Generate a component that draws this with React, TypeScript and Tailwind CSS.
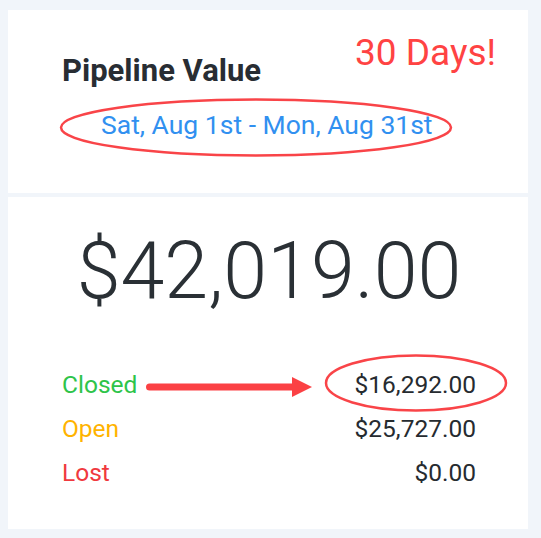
import React from 'react';

const rows = [
  { label: 'Closed', value: '$16,292.00', color: 'text-[#2ec44a]' },
  { label: 'Open', value: '$25,727.00', color: 'text-[#ffb300]' },
  { label: 'Lost', value: '$0.00', color: 'text-[#f0393e]' },
];

const App = () => {
  return (
    <div
      className="relative w-[541px] h-[538px] bg-[#f1f5fa] pt-[10px] pl-2 pr-[13px]"
      style={{ fontFamily: 'Roboto, "Liberation Sans", sans-serif' }}
    >
      {/* Header card */}
      <div className="relative bg-white h-[183px] pl-[54px] pt-[43px]">
        <h2 className="text-[31px] font-bold text-[#282d33] leading-[36px]">Pipeline Value</h2>
        <p className="mt-[21px] ml-[39px] text-[26.5px] text-[#3190f0] leading-[30px]">
          Sat, Aug 1st - Mon, Aug 31st
        </p>
        <span className="absolute left-[347px] top-[21px] text-[37px] text-[#ff4343] leading-[44px]">30 Days!</span>
        <svg className="absolute left-[48px] top-[87px]" width="400" height="62" viewBox="0 0 400 62">
          <ellipse cx="200" cy="30.5" rx="195" ry="28" fill="none" stroke="#f94448" strokeWidth="2.5" />
        </svg>
      </div>

      {/* Totals card */}
      <div className="relative bg-white mt-1 h-[332px] pl-[54px] pr-[52px]">
        <div className="pt-[24px] text-center text-[79px] font-light text-[#2a3035] leading-[100px]">$42,019.00</div>
        <div className="mt-[50px] flex flex-col gap-[16px]">
          {rows.map((r) => (
            <div key={r.label} className="flex justify-between text-[24.5px] leading-[28px]">
              <span className={r.color}>{r.label}</span>
              <span className="text-[#262b30]">{r.value}</span>
            </div>
          ))}
        </div>
        <svg className="absolute left-[130px] top-[155px]" width="380" height="70" viewBox="0 0 380 70">
          <line x1="11.5" y1="35" x2="156" y2="35" stroke="#fb4144" strokeWidth="7" strokeLinecap="round" />
          <polygon points="154,25 174,35 154,45" fill="#fb4144" />
          <ellipse cx="278" cy="31" rx="90" ry="27.5" fill="none" stroke="#f94448" strokeWidth="2.5" />
        </svg>
      </div>
    </div>
  );
};

export default App;
